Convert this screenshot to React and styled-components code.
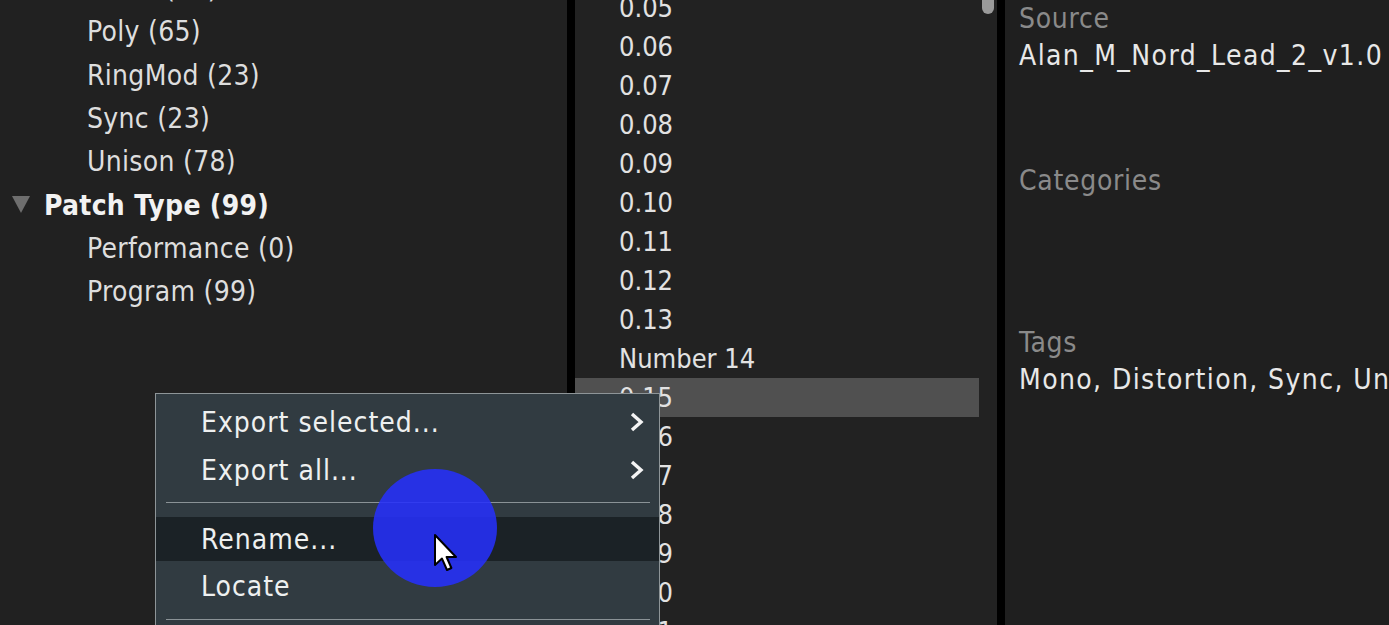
import styled, { createGlobalStyle } from "styled-components";

const GlobalStyle = createGlobalStyle`
  html, body {
    margin: 0;
    padding: 0;
    background: #000;
  }
  body {
    font-family: "DejaVu Sans Condensed", "DejaVu Sans", sans-serif;
    font-stretch: condensed;
  }
`;

const Screen = styled.div`
  position: relative;
  width: 1389px;
  height: 625px;
  overflow: hidden;
  display: flex;
  background: #000;
`;

const Divider = styled.div`
  width: 8px;
  flex-shrink: 0;
  background: #000;
`;

/* left: filter tree */
const TreePanel = styled.div`
  width: 567px;
  flex-shrink: 0;
  background: #212121;
  overflow: hidden;
`;

const TreeList = styled.div`
  margin-top: -33px;
  display: flex;
  flex-direction: column;
`;

const TreeRow = styled.div`
  height: 43.3px;
  flex-shrink: 0;
  display: flex;
  align-items: center;
  gap: 14px;
  padding-left: ${props => (props.header ? "12px" : "87px")};
  font-size: 28px;
  letter-spacing: 0.3px;
  font-weight: ${props => (props.header ? 700 : 400)};
  color: ${props => (props.header ? "#f2f2f2" : "#dedede")};
  white-space: nowrap;
`;

const Twisty = styled.svg`
  width: 18px;
  height: 17px;
  margin-top: -2px;
`;

/* middle: patch list */
const ListPanel = styled.div`
  width: 422px;
  flex-shrink: 0;
  background: #222;
  display: flex;
  overflow: hidden;
`;

const PatchList = styled.div`
  flex: 1;
  margin-top: -12px;
  display: flex;
  flex-direction: column;
`;

const PatchRow = styled.div`
  height: 39px;
  flex-shrink: 0;
  display: flex;
  align-items: center;
  padding-left: 44px;
  font-size: 27px;
  color: #e2e2e2;
  background: ${props => (props.selected ? "#505050" : "transparent")};
`;

const ScrollTrack = styled.div`
  width: 15px;
  flex-shrink: 0;
  padding-left: 3px;
`;

const ScrollThumb = styled.div`
  width: 12px;
  height: 14px;
  border-radius: 0 0 6px 6px;
  background: #9a9a9a;
`;

/* right: details */
const InfoPanel = styled.div`
  flex: 1;
  background: #1f1f1f;
  padding-left: 14px;
  overflow: hidden;
  display: flex;
  flex-direction: column;
  gap: 88px;
`;

const Field = styled.div`
  display: flex;
  flex-direction: column;
`;

const FieldLine = styled.div`
  height: 37px;
  display: flex;
  align-items: center;
  font-size: 28px;
  letter-spacing: ${props => (props.label ? "0.7px" : "1.4px")};
  white-space: nowrap;
  color: ${props => (props.label ? "#8a8a8a" : "#e8e8e8")};
`;

/* context menu */
const Menu = styled.div`
  position: absolute;
  left: 155px;
  top: 393px;
  width: 503px;
  height: 260px;
  background: #313b41;
  border: 1px solid #8e9598;
  padding-top: 4px;
`;

const MenuItem = styled.div`
  height: ${props => props.h || 48}px;
  display: flex;
  align-items: center;
  justify-content: space-between;
  padding: 0 14px 0 45px;
  font-size: 28px;
  letter-spacing: 1px;
  color: #eef0f0;
  background: ${props => (props.active ? "#1b2226" : "transparent")};
`;

const MenuSep = styled.div`
  margin: 8px 9px 14px 10px;
  height: 1px;
  background: #8a9296;
`;

const Chevron = styled.svg`
  width: 16px;
  height: 22px;
`;

const ClickRing = styled.div`
  position: absolute;
  left: 373px;
  top: 469px;
  width: 124px;
  height: 118px;
  border-radius: 50%;
  background: rgba(38, 48, 250, 0.88);
`;

const Cursor = styled.svg`
  position: absolute;
  left: 433px;
  top: 533px;
  width: 26px;
  height: 40px;
`;

const tree = [
  { label: "Mono (34)" },
  { label: "Poly (65)" },
  { label: "RingMod (23)" },
  { label: "Sync (23)" },
  { label: "Unison (78)" },
  { label: "Patch Type (99)", header: true },
  { label: "Performance (0)" },
  { label: "Program (99)" },
];

const patches = [
  "0.05", "0.06", "0.07", "0.08", "0.09", "0.10", "0.11", "0.12", "0.13",
  "Number 14", "0.15", "0.16", "0.17", "0.18", "0.19", "0.20", "0.21",
];

const ChevronIcon = () => (
  <Chevron viewBox="0 0 16 22">
    <polyline points="3,3 12,11 3,19" fill="none" stroke="#f4f4f4" strokeWidth="3.4" strokeLinejoin="miter" />
  </Chevron>
);

export default function App() {
  return (
    <>
      <GlobalStyle />
      <Screen>
        <TreePanel>
          <TreeList>
            {tree.map(row => (
              <TreeRow key={row.label} header={row.header}>
                {row.header && (
                  <Twisty viewBox="0 0 18 17">
                    <polygon points="0,0 18,0 9,17" fill="#6e6e6e" />
                  </Twisty>
                )}
                {row.label}
              </TreeRow>
            ))}
          </TreeList>
        </TreePanel>
        <Divider />
        <ListPanel>
          <PatchList>
            {patches.map(p => (
              <PatchRow key={p} selected={p === "0.15"}>{p}</PatchRow>
            ))}
          </PatchList>
          <ScrollTrack>
            <ScrollThumb />
          </ScrollTrack>
        </ListPanel>
        <Divider />
        <InfoPanel>
          <Field>
            <FieldLine label>Source</FieldLine>
            <FieldLine>Alan_M_Nord_Lead_2_v1.0</FieldLine>
          </Field>
          <Field>
            <FieldLine label>Categories</FieldLine>
            <FieldLine />
          </Field>
          <Field>
            <FieldLine label>Tags</FieldLine>
            <FieldLine>Mono, Distortion, Sync, Unison</FieldLine>
          </Field>
        </InfoPanel>

        <Menu>
          <MenuItem>
            Export selected...
            <ChevronIcon />
          </MenuItem>
          <MenuItem>
            Export all...
            <ChevronIcon />
          </MenuItem>
          <MenuSep />
          <MenuItem active h={44}>Rename...</MenuItem>
          <MenuItem h={50}>Locate</MenuItem>
          <MenuSep />
        </Menu>
        <ClickRing />
        <Cursor viewBox="0 0 13 20">
          <path d="M1 1 L1 16 L4.5 12.8 L7 18.5 L9.2 17.5 L6.8 12 L11.5 12 Z" fill="#fff" stroke="#000" strokeWidth="1" strokeLinejoin="round" />
        </Cursor>
      </Screen>
    </>
  );
}
